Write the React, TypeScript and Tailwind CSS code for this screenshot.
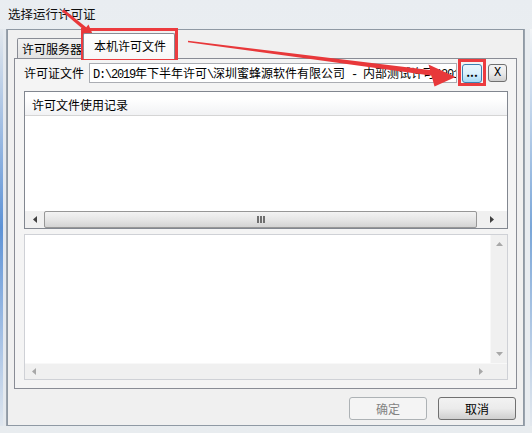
const cjk = "font-['Noto_Sans_CJK_SC','Noto_Sans_CJK_JP',sans-serif]";
const mono = "font-['Liberation_Mono','Noto_Sans_CJK_SC',monospace]";

function Tri({ dir, color = "#404040" }: { dir: "l" | "r" | "u" | "d"; color?: string }) {
  const pts = {
    l: "4,0 4,7 0,3.5",
    r: "0,0 0,7 4,3.5",
    u: "0,4 7,4 3.5,0",
    d: "0,0 7,0 3.5,4",
  }[dir];
  const w = dir === "l" || dir === "r" ? 4 : 7;
  const h = dir === "l" || dir === "r" ? 7 : 4;
  return (
    <svg width={w} height={h} viewBox={`0 0 ${w} ${h}`}>
      <polygon points={pts} fill={color} />
    </svg>
  );
}

function Arrows() {
  return (
    <svg className="absolute inset-0 pointer-events-none" width={532} height={433}>
      {/* arrow to tab */}
      <polygon points="61.5,11 64,9.5 86.5,27.5 84,30" fill="#e8383a" />
      <polygon points="81.5,33 88.5,24.5 93,35" fill="#e8383a" />
      {/* arrow to ... button */}
      <polygon points="188,40.8 188,42.2 432.3,75.8 431.7,70.2" fill="#e8383a" />
      <polygon points="428.5,64.5 455.5,77 434.5,86.5" fill="#e8383a" />
    </svg>
  );
}

export default function App() {
  return (
    <div
      className={`relative w-[532px] h-[433px] overflow-hidden bg-gradient-to-b from-[#e9edf1] via-[#eef1f4] to-[#e8ecef] text-[12px] text-black ${cjk}`}
    >
      {/* Title */}
      <div className="h-[29px] pl-[8px] pt-[6px] leading-[16px] text-[12.5px] text-[#101010]">选择运行许可证</div>

      <div className="flex">
        {/* left frame */}
        <div className="w-[7px] h-[397px] flex">
          <div className="w-[3px] h-full bg-gradient-to-b from-[#e2e7ec] via-[#5d93d6] to-[#dfe6ee]" />
          <div className="w-[3px] h-full bg-[#e4e9ee]" />
          <div className="w-px h-full bg-[#9aa3ad]" />
        </div>

        {/* Client area */}
        <div className="w-[517px] h-[397px] border border-[#8f99a4] bg-[#f0f0f0] pl-[6px] pt-[3px]">
          {/* Tab strip */}
          <div className="flex items-end h-[25px] pl-[3px]">
            <div className="w-[67px] h-[20px] border border-b-0 border-[#898c95] rounded-t-[2px] bg-gradient-to-b from-[#f2f2f2] to-[#e3e3e3] pl-[4px] leading-[19px]">
              许可服务器
            </div>
            <div className="relative z-10 -ml-px w-[92px] h-[26px] -mb-px border border-b-0 border-[#898c95] rounded-t-[2px] bg-gradient-to-b from-white to-[#f7f7f7] pl-[10px] pt-[4px] leading-[16px]">
              本机许可文件
            </div>
          </div>

          {/* Tab panel */}
          <div className="w-[503px] h-[331px] border border-[#898c95] bg-[#f4f4f4] pl-[9px] pt-[4px]">
            {/* file row */}
            <div className="flex items-center h-[20px]">
              <div className="w-[65px] leading-[16px]">许可证文件</div>
              <div className="w-[368px] h-[20px] border border-[#abadb3] bg-white overflow-hidden whitespace-nowrap pl-[3px] leading-[18px]">
                <span className={`${mono} tracking-[-1.2px]`}>D:\2019</span>
                <span>年下半年许可</span>
                <span className={`${mono} tracking-[-1.2px]`}>\</span>
                <span>深圳蜜蜂源软件有限公司</span>
                <span className={`${mono} tracking-[-1.2px]`}> - </span>
                <span>内部测试许可</span>
                <span className={`${mono} tracking-[-1.2px]`}>(2018</span>
              </div>
              <div className="ml-[5px] w-[20px] h-[19px] border border-[#3c7fb1] rounded-[3px] bg-gradient-to-b from-[#eaf6fd] via-[#d9f0fc] to-[#a7d9f5] flex items-center justify-center font-bold leading-none text-[12px] pb-[3px]">
                ...
              </div>
              <div className={`ml-[6px] w-[19px] h-[18px] border border-[#707070] rounded-[3px] bg-gradient-to-b from-[#f2f2f2] via-[#ebebeb] to-[#cfcfcf] flex items-center justify-center leading-none text-[12px] ${mono}`}>
                X
              </div>
            </div>

            {/* List view */}
            <div className="mt-[8px] w-[484px] h-[138px] border border-[#828790] bg-white flex flex-col">
              <div className="h-[24px] border-b border-[#d5d5d5] bg-gradient-to-b from-white from-30% to-[#f1f2f4] pl-[7px] pt-[5px] leading-[16px]">
                许可文件使用记录
              </div>
              <div className="flex-1" />
              <div className="h-[17px] flex bg-[#eaeaea]">
                <div className="w-[19px] flex items-center justify-center bg-[#f0f0f0]">
                  <Tri dir="l" />
                </div>
                <div className="w-[433px] h-[17px] border border-[#979797] rounded-[2px] bg-gradient-to-b from-[#f3f3f3] via-[#e6e6e6] to-[#d3d3d3] flex items-center justify-center">
                  <div className="flex gap-[1px]">
                    <div className="w-[2px] h-[7px] bg-[#6f6f6f]" />
                    <div className="w-[2px] h-[7px] bg-[#6f6f6f]" />
                    <div className="w-[2px] h-[7px] bg-[#6f6f6f]" />
                  </div>
                </div>
                <div className="flex-1 flex items-center justify-center bg-[#f0f0f0]">
                  <Tri dir="r" />
                </div>
              </div>
            </div>

            {/* Memo */}
            <div className="mt-[5px] w-[484px] h-[146px] border border-[#cfd1d6] bg-white flex flex-col">
              <div className="flex-1 flex">
                <div className="flex-1" />
                <div className="w-[17px] flex flex-col items-center justify-between py-[7px] bg-[#f0f0f0] border-l border-[#f8f8f8]">
                  <Tri dir="u" color="#a8a8a8" />
                  <Tri dir="d" color="#a8a8a8" />
                </div>
              </div>
              <div className="h-[16px] flex bg-[#f0f0f0] border-t border-[#f8f8f8]">
                <div className="flex-1 flex items-center justify-between px-[7px]">
                  <Tri dir="l" color="#a8a8a8" />
                  <Tri dir="r" color="#a8a8a8" />
                </div>
                <div className="w-[17px] bg-[#f0f0f0]" />
              </div>
            </div>
          </div>

          {/* Buttons */}
          <div className="mt-[8px] flex justify-end gap-[11px] pr-[7px]">
            <div className="w-[78px] h-[23px] border border-[#adb2b5] rounded-[3px] bg-[#f4f4f4] text-[#838383] flex items-center justify-center leading-none">
              确定
            </div>
            <div className="w-[78px] h-[23px] border border-[#707070] rounded-[3px] bg-gradient-to-b from-[#f2f2f2] via-[#ebebeb] to-[#cfcfcf] flex items-center justify-center leading-none">
              取消
            </div>
          </div>
        </div>

        {/* right frame */}
        <div className="w-[8px] h-[397px] flex">
          <div className="w-px h-full bg-[#9aa3ad]" />
          <div className="w-[5px] h-full bg-[#e8ecf0]" />
          <div className="w-[2px] h-full bg-gradient-to-b from-[#f2f4f6] via-[#7aa6d8] to-[#e3e8ee]" />
        </div>
      </div>

      {/* Red highlight boxes */}
      <div className="absolute left-[81px] top-[28px] w-[97px] h-[32px] border-[3px] border-[#ec3b3f] pointer-events-none" />
      <div className="absolute left-[458px] top-[59px] w-[28px] h-[27px] border-[3px] border-[#ec3b3f] pointer-events-none" />
      <Arrows />
    </div>
  );
}
